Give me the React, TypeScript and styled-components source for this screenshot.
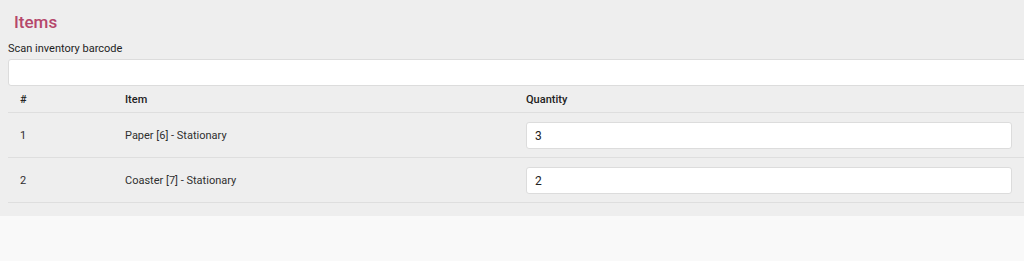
import React from 'react';
import styled, { createGlobalStyle } from 'styled-components';

const GlobalStyle = createGlobalStyle`
  html, body {
    margin: 0;
    padding: 0;
    background: #f9f9f9;
  }
  body {
    font-family: Roboto, 'Liberation Sans', Arial, sans-serif;
    color: #222;
  }
`;

type Item = {
  id: number;
  name: string;
  quantity: number;
};

const items: Item[] = [
  { id: 1, name: 'Paper [6] - Stationary', quantity: 3 },
  { id: 2, name: 'Coaster [7] - Stationary', quantity: 2 },
];

const Panel = styled.section`
  background-color: #eeeeee;
  padding: 12px 0 13px 8px;
  width: 1024px;
  box-sizing: border-box;
  overflow: hidden;
`;

const Title = styled.h2`
  margin: 0 0 10px 6px;
  font-size: 17px;
  font-weight: 500;
  line-height: 20px;
  color: #b5476b;
`;

const Label = styled.label`
  display: block;
  font-size: 11px;
  line-height: 13px;
  color: #1e1e1e;
  margin-bottom: 4px;
`;

const TextInput = styled.input<{ $full?: boolean }>`
  display: block;
  box-sizing: border-box;
  width: ${(p) => (p.$full ? '1030px' : '100%')};
  height: 27px;
  margin: 0;
  padding: 0 8px;
  background: #fff;
  border: 1px solid #dcdcdc;
  border-radius: 3px;
  font-family: Roboto, 'Liberation Sans', Arial, sans-serif;
  font-size: 12px;
  color: #222;
  outline: none;
`;

const Table = styled.table`
  width: 1016px;
  border-collapse: collapse;
  table-layout: fixed;
  font-size: 11px;
`;

const HeadCell = styled.th<{ $width?: number }>`
  box-sizing: border-box;
  width: ${(p) => (p.$width ? `${p.$width}px` : 'auto')};
  text-align: left;
  font-weight: 500;
  color: #222;
  padding: 7px 12px 6px;
  line-height: 13px;
  border-bottom: 1px solid #dedede;
`;

const Cell = styled.td`
  padding: 9px 12px 8px;
  line-height: 13px;
  color: #2e2e2e;
  vertical-align: middle;
  border-bottom: 1px solid #dedede;
`;

export default function App() {
  return (
    <>
      <GlobalStyle />
      <Panel>
        <Title>Items</Title>
        <Label htmlFor="barcode">Scan inventory barcode</Label>
        <TextInput id="barcode" type="text" $full />
        <Table>
          <thead>
            <tr>
              <HeadCell $width={105}>#</HeadCell>
              <HeadCell $width={401}>Item</HeadCell>
              <HeadCell>Quantity</HeadCell>
            </tr>
          </thead>
          <tbody>
            {items.map((item) => (
              <tr key={item.id}>
                <Cell>{item.id}</Cell>
                <Cell>{item.name}</Cell>
                <Cell>
                  <TextInput type="text" defaultValue={String(item.quantity)} />
                </Cell>
              </tr>
            ))}
          </tbody>
        </Table>
      </Panel>
    </>
  );
}
